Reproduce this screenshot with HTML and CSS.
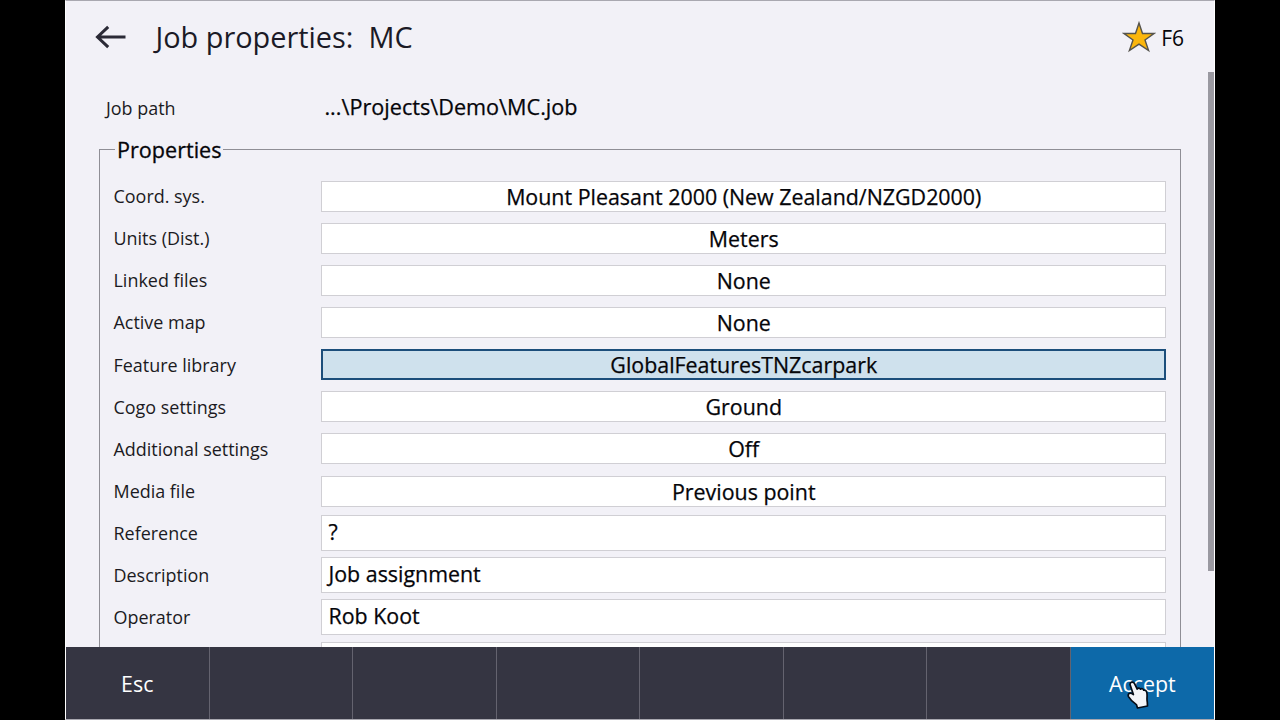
FILE: index.html
```html
<!DOCTYPE html>
<html lang="en">
<head>
<meta charset="utf-8">
<title>Job properties</title>
<link rel="stylesheet" href="styles.css">
</head>
<body>
<div class="screen">
  <header class="header">
    <svg class="back" width="32" height="26" viewBox="0 0 32 26" fill="none" stroke="#2b2a36" stroke-width="3" stroke-linejoin="miter"><path d="M2.5 13H30.5M13.2 2.8L2.5 13L13.2 23.2"/></svg>
    <h1 class="title">Job properties:&nbsp; MC</h1>
    <svg class="star" width="34" height="32" viewBox="0 0 34 32"><path d="M17 2L20.5 12.5H32L23 19L26.6 29.6L17 23.2L7.4 29.6L11 19L2 12.5H13.5Z" fill="#fbb60c" stroke="#55534c" stroke-width="1.4"/></svg>
    <span class="key">F6</span>
  </header>
  <main class="content">
    <div class="path"><span class="label path-label">Job path</span><span class="path-value">...\Projects\Demo\MC.job</span></div>
    <section class="group">
      <h2 class="legend">Properties</h2>
      <div class="rows">
        <div class="row"><span class="label">Coord. sys.</span><div class="button">Mount Pleasant 2000 (New Zealand/NZGD2000)</div></div>
        <div class="row"><span class="label">Units (Dist.)</span><div class="button">Meters</div></div>
        <div class="row"><span class="label">Linked files</span><div class="button">None</div></div>
        <div class="row"><span class="label">Active map</span><div class="button">None</div></div>
        <div class="row"><span class="label">Feature library</span><div class="button focused">GlobalFeaturesTNZcarpark</div></div>
        <div class="row"><span class="label">Cogo settings</span><div class="button">Ground</div></div>
        <div class="row"><span class="label">Additional settings</span><div class="button">Off</div></div>
        <div class="row"><span class="label">Media file</span><div class="button">Previous point</div></div>
        <div class="row"><span class="label">Reference</span><div class="input">?</div></div>
        <div class="row"><span class="label">Description</span><div class="input">Job assignment</div></div>
        <div class="row"><span class="label">Operator</span><div class="input">Rob Koot</div></div>
        <div class="row"><span class="label"></span><div class="input"></div></div>
      </div>
    </section>
    <div class="scrollbar"></div>
  </main>
  <footer class="softkeys">
    <div class="softkey">Esc</div>
    <div class="softkey"></div>
    <div class="softkey"></div>
    <div class="softkey"></div>
    <div class="softkey"></div>
    <div class="softkey"></div>
    <div class="softkey"></div>
    <div class="softkey accept">Accept
      <svg class="pointer" width="24" height="30" viewBox="0 0 24 30"><path d="M3 4.5C3 1.8 6 1.2 7.4 3.4L10.2 9C11 7.8 12.8 8 13.6 9.2C14.5 8.3 16.2 8.7 16.7 10.1C18.4 9.8 19.6 11 19.9 12.8C20.5 16 19.5 19 20.3 22L20.5 26L10.5 28L9.4 24.6C6 22.3 3.2 19.6 1.5 16.6C.5 14.2 2.6 12.4 4.6 13.4L6.4 14.6Z" fill="#f4f5f8" stroke="#050c16" stroke-width="1.7" stroke-linejoin="round"/></svg>
    </div>
  </footer>
</div>
</body>
</html>
```
FILE: styles.css
```css
* { box-sizing: border-box; }
body {
  margin: 0;
  height: 720px;
  overflow: hidden;
  background: #000;
  font-family: "Open Sans", "Noto Sans", sans-serif;
  color: #050509;
}
.screen {
  width: 1150px;
  height: 720px;
  margin-left: 65px;
  display: flex;
  flex-direction: column;
  background: #f2f1f7;
  border: 1px solid #a9a8b0;
  border-left-color: #fff;
  border-right-color: #fff;
}
.header {
  height: 71px;
  flex: none;
  display: flex;
  align-items: center;
  padding: 0 30px 0 29px;
}
.back { margin-top: 1px; }
.title {
  margin: 0 0 0 28.4px;
  flex: 1;
  font-size: 28.9px;
  font-weight: 400;
  line-height: 40px;
  color: #1b1a26;
}
.star { margin-right: 5px; }
.key { font-size: 21px; margin-top: 2px; }
.content {
  position: relative;
  height: 575px;
  flex: none;
  overflow: hidden;
  padding: 20px 33px 0;
}
.path { display: flex; align-items: center; height: 32px; }
.label { width: 207px; flex: none; font-size: 17.95px; color: #1b1a22; }
.path-label { width: 218px; padding-left: 7px; }
.path-value {
  margin-top: -4px;
  padding-left: 7.4px;
  font-size: 21.65px;
  -webkit-text-stroke: 0.25px;
}
.group {
  margin-top: 25px;
  height: 520px;
  border: 1px solid #8f8e95;
}
.legend {
  width: max-content;
  margin: -17px 0 0 15px;
  padding: 0 1px 0 2px;
  background: #f2f1f7;
  font-size: 21.6px;
  font-weight: 400;
  line-height: 33px;
  -webkit-text-stroke: 0.3px;
}
.rows { padding: 9px 14px 0 13.5px; }
.row { display: flex; align-items: center; height: 42.15px; }
.button, .input {
  flex: 1;
  height: 31px;
  border: 1px solid #d0cfd4;
  background: #fff;
  font-size: 21.4px;
  line-height: 29px;
  text-align: center;
  -webkit-text-stroke: 0.25px;
}
.button { padding-left: 1px; }
.button.focused {
  border: 2px solid #1c4e7b;
  background: #cfe1ed;
  line-height: 28px;
}
.input {
  height: 36px;
  padding-left: 7px;
  line-height: 32px;
  text-align: left;
}
.scrollbar {
  position: absolute;
  top: 0;
  right: 0;
  width: 6px;
  height: 499px;
  background: #9a99a1;
}
.softkeys {
  height: 72px;
  flex: none;
  display: grid;
  grid-template-columns: repeat(8, 1fr);
  background: #353542;
}
.softkey {
  position: relative;
  display: flex;
  align-items: center;
  justify-content: center;
  padding-top: 1px;
  border-right: 1px solid #64636f;
  font-size: 21.4px;
  color: #fff;
}
.softkey.accept { background: #0d69a9; border-right: 0; }
.pointer { position: absolute; left: 56px; top: 33px; }
```
